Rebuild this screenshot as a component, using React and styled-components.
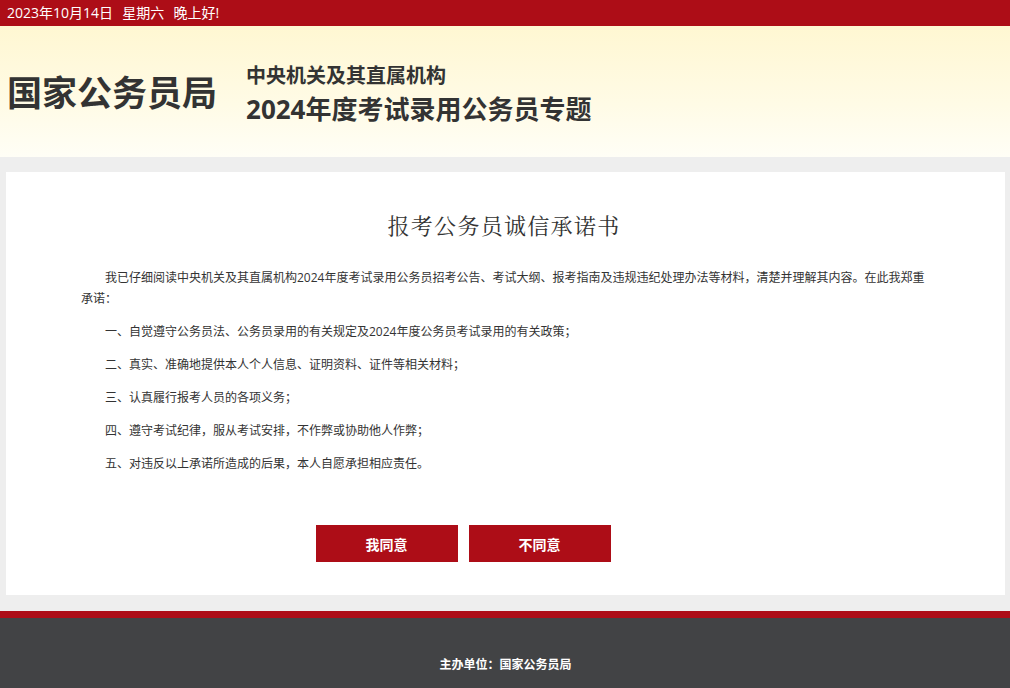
import React from 'react';
import styled, { createGlobalStyle } from 'styled-components';

const GlobalStyle = createGlobalStyle`
  html, body {
    margin: 0;
    padding: 0;
    background: #eeeeee;
    font-family: "Open Sans", "Noto Sans CJK SC", sans-serif;
    color: #333;
  }
`;

const RED = '#ad0d17';

const TopBar = styled.div`
  height: 26px;
  background: ${RED};
  color: #fff;
  font-size: 14px;
  line-height: 26px;
  padding-left: 7px;
  white-space: pre;
  word-spacing: 1px;
`;

const Header = styled.header`
  height: 131px;
  display: flex;
  align-items: center;
  gap: 29px;
  padding-left: 7px;
  background: linear-gradient(to bottom, #fff7d2 0%, #fffbe6 60%, #fffef6 100%);
`;

const Logo = styled.h1`
  margin: 0;
  font-size: 35px;
  font-weight: 700;
  color: #333;
  line-height: 1;
  padding-top: 1px;
`;

const Subtitle = styled.div`
  display: flex;
  flex-direction: column;
  color: #333;
  font-weight: 700;
  padding-top: 6px;
`;

const SubLine = styled.div`
  font-size: ${p => (p.$big ? '26px' : '20px')};
  line-height: ${p => (p.$big ? '38px' : '28px')};
`;

const Main = styled.main`
  padding: 15px 5px 16px 6px;
`;

const Card = styled.section`
  background: #fff;
  padding: 38px 72px 33px 75px;
`;

const Title = styled.h2`
  margin: 0 0 27px;
  text-align: center;
  font-family: "Noto Serif CJK SC", "Liberation Serif", serif;
  font-weight: 400;
  font-size: 22px;
  letter-spacing: 1.3px;
  line-height: 30px;
  color: #333;
  padding-right: 6px;
`;

const Para = styled.p`
  margin: 0 0 12px;
  font-size: 12px;
  line-height: 21px;
  text-indent: 2em;
  color: #333;
`;

const ButtonRow = styled.div`
  display: flex;
  justify-content: center;
  gap: 11px;
  margin-top: 51px;
  padding-right: 88px;
`;

const Button = styled.button`
  width: 142px;
  height: 37px;
  border: none;
  background: ${RED};
  color: #fff;
  font-family: "Noto Sans CJK SC", sans-serif;
  font-weight: 700;
  font-size: 14px;
  cursor: pointer;
`;

const FooterLine = styled.div`
  height: 7px;
  background: ${RED};
`;

const Footer = styled.footer`
  height: 90px;
  background: #424345;
  color: #fff;
  display: flex;
  align-items: center;
  justify-content: center;
  font-size: 12px;
  font-weight: 700;
  font-family: "Noto Sans CJK SC", sans-serif;
  padding-left: 1px;
`;

const items = [
  '一、自觉遵守公务员法、公务员录用的有关规定及2024年度公务员考试录用的有关政策；',
  '二、真实、准确地提供本人个人信息、证明资料、证件等相关材料；',
  '三、认真履行报考人员的各项义务；',
  '四、遵守考试纪律，服从考试安排，不作弊或协助他人作弊；',
  '五、对违反以上承诺所造成的后果，本人自愿承担相应责任。',
];

export default function App() {
  return (
    <>
      <GlobalStyle />
      <TopBar>{'2023年10月14日  星期六  晚上好!'}</TopBar>
      <Header>
        <Logo>国家公务员局</Logo>
        <Subtitle>
          <SubLine>中央机关及其直属机构</SubLine>
          <SubLine $big>2024年度考试录用公务员专题</SubLine>
        </Subtitle>
      </Header>
      <Main>
        <Card>
          <Title>报考公务员诚信承诺书</Title>
          <Para>
            我已仔细阅读中央机关及其直属机构2024年度考试录用公务员招考公告、考试大纲、报考指南及违规违纪处理办法等材料，清楚并理解其内容。在此我郑重承诺：
          </Para>
          {items.map(t => (
            <Para key={t}>{t}</Para>
          ))}
          <ButtonRow>
            <Button>我同意</Button>
            <Button>不同意</Button>
          </ButtonRow>
        </Card>
      </Main>
      <FooterLine />
      <Footer>主办单位：国家公务员局</Footer>
    </>
  );
}
